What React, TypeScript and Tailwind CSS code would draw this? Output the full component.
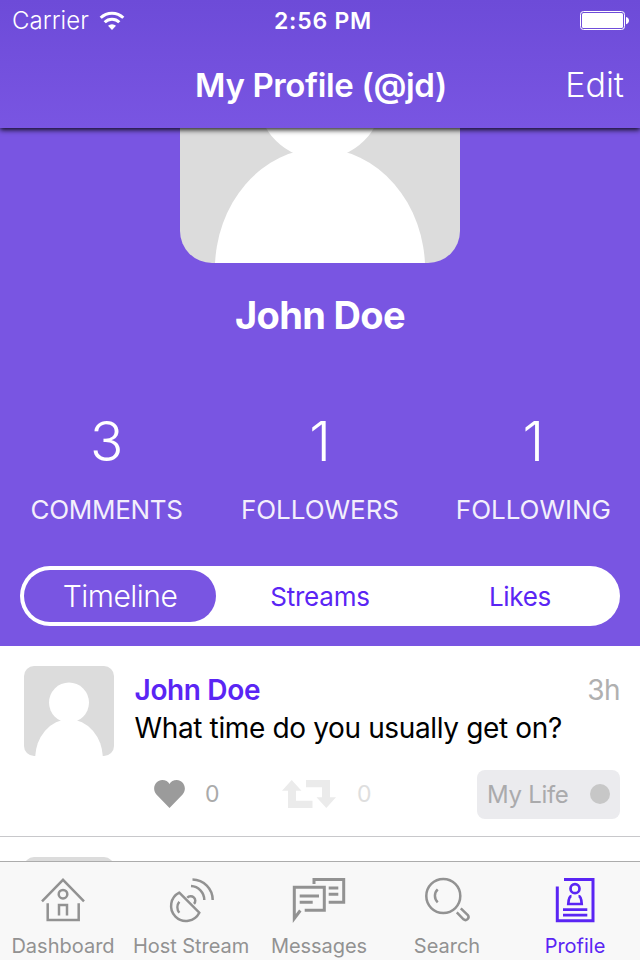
import React from "react";

const Avatar = ({ className }: { className: string }) => (
  <svg viewBox="0 0 90 90" className={className}>
    <rect width="90" height="90" fill="#dcdcdc" />
    <circle cx="45" cy="36.6" r="20" fill="#fff" />
    <ellipse cx="45" cy="92.3" rx="33.8" ry="39.1" fill="#fff" />
  </svg>
);

const Wifi = () => (
  <svg viewBox="0 0 26 20" className="h-5 w-[26px]" fill="none" stroke="#fff">
    <path d="M1.7 6.8a16 16 0 0 1 22.6 0" strokeWidth="3" />
    <path d="M5.7 11.2a10.3 10.3 0 0 1 14.6 0" strokeWidth="3" />
    <path d="M13 19l-4-4.2a5.8 5.8 0 0 1 8 0z" fill="#fff" stroke="none" />
  </svg>
);

const Battery = () => (
  <svg viewBox="0 0 50 20" className="h-5 w-[50px]">
    <rect x="0.5" y="1.5" width="44" height="18" rx="3" fill="none" stroke="#fff" />
    <rect x="2" y="3" width="41" height="15" rx="1.5" fill="#fff" />
    <path d="M46 7c4 .8 4 6.4 0 7.200z" fill="#fff" />
  </svg>
);

const House = () => (
  <g>
    <path d="M3 25.300L24 3.800 45 25.300M8.700 27.300V44h31V27.300" />
    <circle cx="24" cy="18.200" r="4.300" />
    <path d="M20 39.500V29h8v10.500" />
  </g>
);

const Dish = () => (
  <g>
    <path d="M12.300 16.700L32.300 36.700A14.900 14.900 0 1 1 12.300 16.700Z" />
    <path d="M12.300 25.700a9 9 0 0 0 0 11" />
    <path d="M20.300 21.800a4.500 4.500 0 1 1 6.700 6" />
    <path d="M24 10a14 14 0 0 1 13.300 14M25.500 3.500A20.500 20.500 0 0 1 45.700 24" />
  </g>
);

const Chat = () => (
  <g strokeWidth="3">
    <path d="M19 8V3.500h29.700v22.800h-15" />
    <path d="M33.700 12h9.600M33.700 18.300h9.600" />
    <path d="M9.700 34.300h19.600v-23h-30V42.500l6-8" />
    <path d="M4.700 20H24M4.700 26.300h13" />
  </g>
);

const Glass = () => (
  <g>
    <circle cx="20.300" cy="20" r="17" />
    <path d="M14.700 13.300a9 9 0 0 0 0 13" />
    <path d="M33.800 36.300l6.700 7c2.800 2.300 6.600-1.400 4.300-4.300L37.800 32.300" />
  </g>
);

const Badge = () => (
  <g strokeWidth="3">
    <path d="M13 3.500h29v41.200H6.300V10.500" />
    <circle cx="24" cy="12.700" r="4.500" strokeWidth="2.700" />
    <path d="M20.500 20.200c-2.200 0-3 4.500-3.200 7.800h13.400c-.2-3.300-1-7.800-3.200-7.800" strokeWidth="2.700" />
    <path d="M12 33.700h24.300M12 39.200h24.300" strokeWidth="2.700" />
  </g>
);

const tabs = [
  { name: "Dashboard", icon: <House />, spacing: "tracking-normal" },
  { name: "Host Stream", icon: <Dish />, spacing: "tracking-[-0.05px]" },
  { name: "Messages", icon: <Chat />, spacing: "tracking-[-0.05px]" },
  { name: "Search", icon: <Glass />, spacing: "tracking-normal" },
  { name: "Profile", icon: <Badge />, spacing: "tracking-normal", active: true },
];

const stats = [
  { value: "3", label: "COMMENTS", spacing: "tracking-[-0.3px]" },
  { value: "1", label: "FOLLOWERS", spacing: "tracking-[-0.05px]" },
  { value: "1", label: "FOLLOWING", spacing: "tracking-[-0.05px]" },
];

export default function App() {
  return (
    <div className="flex h-[960px] w-[640px] flex-col overflow-hidden bg-white font-['Inter',sans-serif]">
      <header className="relative z-10 flex h-32 shrink-0 flex-col bg-linear-to-b from-[#6d4bd8] to-[#7955e2] text-white shadow-[0_2px_5px_rgba(0,0,0,0.85)]">
        <div className="grid h-10 grid-cols-3 items-center">
          <div className="flex items-center gap-[10.5px] pl-3">
            <span className="pt-px text-[24px] leading-10 font-[350] tracking-[0.05px]">Carrier</span>
            <Wifi />
          </div>
          <span className="pl-[6px] text-center text-[23px] leading-10 font-semibold tracking-[0.75px]">2:56 PM</span>
          <div className="flex justify-end pr-[10px] pb-px">
            <Battery />
          </div>
        </div>
        <div className="grid h-[88px] grid-cols-[120px_1fr_120px] items-center">
          <span />
          <h1 className="pl-[2px] text-center text-[33px] leading-[88px] font-semibold tracking-[-0.35px]">My Profile (@jd)</h1>
          <span className="pt-px pr-4 text-right text-[34px] leading-[88px] font-light">Edit</span>
        </div>
      </header>

      <section className="flex h-[518px] shrink-0 flex-col items-center bg-[#7955e2] text-white">
        <Avatar className="-mt-[145px] size-[280px] shrink-0 rounded-[32px]" />
        <h2 className="mt-[27px] text-[38px] leading-[50px] font-bold tracking-[-0.65px]">John Doe</h2>
        <div className="mt-[71px] grid w-full grid-cols-3">
          {stats.map((s) => (
            <div key={s.label} className="flex flex-col items-center">
              <span className="text-[55px] leading-[60px] font-light">{s.value}</span>
              <span className={`mt-[19px] text-[26px] leading-10 text-[#f3effc] ${s.spacing}`}>{s.label}</span>
            </div>
          ))}
        </div>
        <nav className="mt-9 grid h-[60px] w-[600px] shrink-0 grid-cols-[196px_200px_200px] items-center rounded-full bg-white py-1 pl-1 text-[26px] text-[#5a25f4]">
          <span className="flex h-[52px] w-[192px] items-center justify-center rounded-full bg-[#7955e2] text-[30px] font-light tracking-[-0.5px] text-white">Timeline</span>
          <span className="text-center tracking-[-0.2px]">Streams</span>
          <span className="text-center tracking-[-0.3px]">Likes</span>
        </nav>
      </section>

      <main className="flex h-[215px] shrink-0 flex-col overflow-hidden">
        <article className="flex h-[191px] shrink-0 border-b border-[#c8c8cb] pt-5 pr-5 pl-6">
          <Avatar className="size-[90px] shrink-0 rounded-[10px]" />
          <div className="ml-[20.5px] flex-1">
            <div className="mt-[5px] flex items-center justify-between leading-[38px]">
              <b className="text-[28px] font-semibold tracking-[-0.35px] text-[#5a25f4]">John Doe</b>
              <span className="text-[28px] tracking-[-0.6px] text-[#b0b0b0]">3h</span>
            </div>
            <p className="text-[28px] leading-[38px] tracking-[-0.36px] whitespace-nowrap text-black">What time do you usually get on?</p>
            <div className="mt-[23px] flex h-[49px] items-center text-[24px]">
              <svg viewBox="0 0 32 28" preserveAspectRatio="none" className="mb-[2px] ml-[19.5px] h-7 w-[31px] text-[#9b9b9b]" fill="currentColor">
                <path d="M16 28L2.500 14.500C-3 8 2 0 8.500 0c3.500 0 6 1.500 7.500 4 1.500-2.500 4-4 7.500-4C30 0 35 8 29.500 14.500z" />
              </svg>
              <span className="ml-5 w-[77px] text-[23px] text-[#aaa]">0</span>
              <svg viewBox="0 0 54 28" className="mb-[2px] h-7 w-[54px] text-[#ebebeb]" fill="currentColor">
                <path d="M9.700 0l9.800 10.700H14v10h16.500V28H6V10.700H0z" />
                <path d="M24 0h24v17.300h6L44.300 28l-9.800-10.700H40V7.300H24z" />
              </svg>
              <span className="ml-[21px] text-[23px] text-[#dedede]">0</span>
              <div className="ml-auto flex h-[49px] w-[143px] items-center justify-between rounded-lg bg-[#ebebee] pr-[10px] pl-[10px] text-[#aaaaac]">
                <span className="tracking-[-0.3px]">My Life</span>
                <i className="mb-px size-5 rounded-full bg-[#c7c7c7]" />
              </div>
            </div>
          </div>
        </article>
        <div className="shrink-0 pt-5 pl-6">
          <Avatar className="size-[90px] rounded-[10px]" />
        </div>
      </main>

      <footer className="grid h-[99px] shrink-0 grid-cols-[126px_130px_126px_130px_126px] border-t border-[#acacac] bg-[#f8f8f8]">
        {tabs.map((t) => (
          <div key={t.name} className={`flex flex-col items-center pt-[14px] ${t.active ? "text-[#5a25f4]" : "text-[#929292]"}`}>
            <svg viewBox="0 0 48 48" className="size-12 overflow-visible" fill="none" stroke="currentColor" strokeWidth="2.500">
              {t.icon}
            </svg>
            <span className={`mt-[8px] text-[20px] leading-7 whitespace-nowrap ${t.spacing}`}>{t.name}</span>
          </div>
        ))}
      </footer>
    </div>
  );
}
